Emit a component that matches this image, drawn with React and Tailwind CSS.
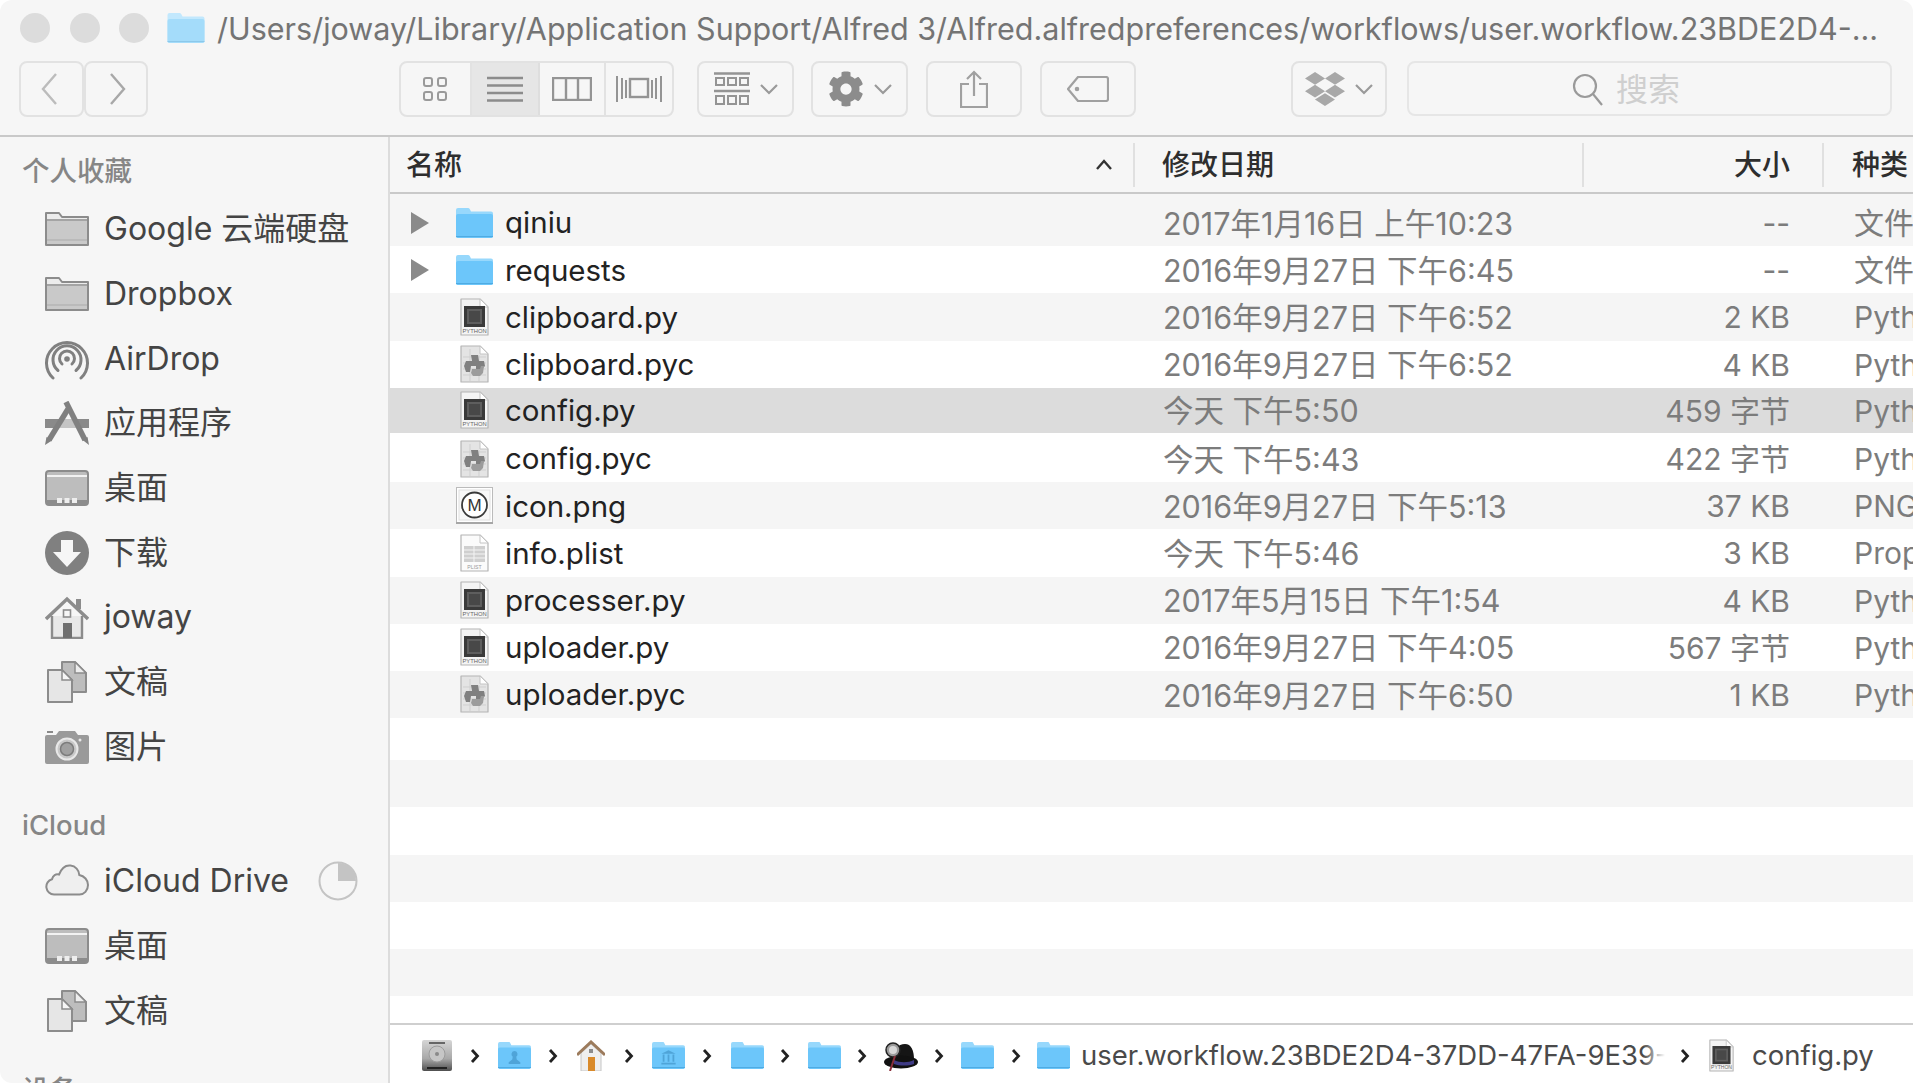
import { FaCog, FaDropbox } from "react-icons/fa";

const files = [
  { icon: "folder", name: "qiniu", date: "2017年1月16日 上午10:23", size: "--", kind: "文件夹", arrow: true },
  { icon: "folder", name: "requests", date: "2016年9月27日 下午6:45", size: "--", kind: "文件夹", arrow: true },
  { icon: "py", name: "clipboard.py", date: "2016年9月27日 下午6:52", size: "2 KB", kind: "Python 源代码" },
  { icon: "pyc", name: "clipboard.pyc", date: "2016年9月27日 下午6:52", size: "4 KB", kind: "Python 字节码" },
  { icon: "py", name: "config.py", date: "今天 下午5:50", size: "459 字节", kind: "Python 源代码", selected: true },
  { icon: "pyc", name: "config.pyc", date: "今天 下午5:43", size: "422 字节", kind: "Python 字节码" },
  { icon: "png", name: "icon.png", date: "2016年9月27日 下午5:13", size: "37 KB", kind: "PNG 图像" },
  { icon: "plist", name: "info.plist", date: "今天 下午5:46", size: "3 KB", kind: "Property List" },
  { icon: "py", name: "processer.py", date: "2017年5月15日 下午1:54", size: "4 KB", kind: "Python 源代码" },
  { icon: "py", name: "uploader.py", date: "2016年9月27日 下午4:05", size: "567 字节", kind: "Python 源代码" },
  { icon: "pyc", name: "uploader.pyc", date: "2016年9月27日 下午6:50", size: "1 KB", kind: "Python 字节码" },
];

function GrayFolder() {
  return (
    <svg width="44" height="36" viewBox="0 0 44 36">
      <path d="M1 34V2h13l3 4h26v28z" fill="#ececec" stroke="#8c8c8c" strokeWidth="2" strokeLinejoin="round" />
      <rect x="2" y="10" width="40" height="23" fill="#c9c9c9" />
      <path d="M2 9h40" stroke="#8c8c8c" strokeWidth="1.5" />
      <path d="M2 29h40" stroke="#b5b5b5" strokeWidth="1.5" />
    </svg>
  );
}

function AirDropIcon() {
  return (
    <svg width="44" height="44" viewBox="0 0 44 44" fill="none" stroke="#808080" strokeWidth="3" strokeLinecap="round">
      <path d="M8 41A20.500 20.500 0 1 1 36 41" />
      <path d="M13 33.500A14 14 0 1 1 31 33.500" />
      <path d="M17 27A7.500 7.500 0 1 1 27 27" />
      <circle cx="22" cy="22" r="2.800" fill="#808080" stroke="none" />
    </svg>
  );
}

function AppsIcon() {
  return (
    <svg width="44" height="44" viewBox="0 0 44 44">
      <path d="M0 18h44v9H0z" fill="#8a8a8a" />
      <path d="M15 18h14l4 9H11z" fill="#c4c4c4" />
      <path d="M21 1l19 38" stroke="#808080" strokeWidth="5.500" />
      <path d="M23 8L4 39" stroke="#808080" strokeWidth="5.500" />
      <path d="M0 44l1.500-8 5.500 3.500zM44 44l-7-5.500 5.500-2.500z" fill="#808080" />
    </svg>
  );
}

function DesktopIcon() {
  return (
    <svg width="44" height="36" viewBox="0 0 44 36">
      <rect x="1" y="1" width="42" height="34" rx="3" fill="#bdbdbd" stroke="#8c8c8c" strokeWidth="2" />
      <rect x="2" y="5" width="40" height="2" fill="#f2f2f2" />
      <rect x="2" y="30" width="40" height="4" fill="#8c8c8c" />
      <rect x="12" y="28" width="5" height="5" fill="#eee" />
      <rect x="19.500" y="28" width="5" height="5" fill="#eee" />
      <rect x="27" y="28" width="5" height="5" fill="#eee" />
    </svg>
  );
}

function DownloadIcon() {
  return (
    <svg width="44" height="44" viewBox="0 0 44 44">
      <circle cx="22" cy="22" r="22" fill="#808080" />
      <path d="M16 9h12v12h8L22 36 8 21h8z" fill="#f6f6f6" />
    </svg>
  );
}

function HomeIcon() {
  return (
    <svg width="44" height="44" viewBox="0 0 44 44">
      <path d="M7 21v22h30V21" fill="#e8e8e8" stroke="#8c8c8c" strokeWidth="2.400" />
      <path d="M1 24L22 4l21 20" fill="none" stroke="#8c8c8c" strokeWidth="3.400" />
      <rect x="31" y="4" width="5" height="10" fill="#8c8c8c" />
      <rect x="18" y="28" width="9" height="15" fill="#6f6f6f" />
      <rect x="18.500" y="15" width="7" height="7" fill="#f6f6f6" stroke="#8c8c8c" strokeWidth="1.600" />
    </svg>
  );
}

function DocsIcon() {
  return (
    <svg width="40" height="42" viewBox="0 0 40 42">
      <path d="M15 1h13l11 11v19H15z" fill="#bdbdbd" stroke="#8c8c8c" strokeWidth="2" strokeLinejoin="round" />
      <path d="M28 1v11h11z" fill="#ededed" stroke="#8c8c8c" strokeWidth="1.500" />
      <path d="M1 9h14l10 10v22H1z" fill="#e6e6e6" stroke="#8c8c8c" strokeWidth="2" strokeLinejoin="round" />
      <path d="M15 9v10h10z" fill="#f6f6f6" stroke="#8c8c8c" strokeWidth="1.500" />
    </svg>
  );
}

function CameraIcon() {
  return (
    <svg width="44" height="34" viewBox="0 0 44 34">
      <path d="M2 5h9l3-4h16l3 4h9a2 2 0 0 1 2 2v25a2 2 0 0 1-2 2H2a2 2 0 0 1-2-2V7a2 2 0 0 1 2-2z" fill="#9a9a9a" />
      <rect x="2" y="1" width="6" height="2" fill="#8a8a8a" />
      <circle cx="22" cy="19" r="10.500" fill="#c8c8c8" stroke="#e8e8e8" strokeWidth="2" />
      <circle cx="22" cy="19" r="6.500" fill="#a0a0a0" stroke="#7c7c7c" strokeWidth="1.500" />
      <circle cx="35" cy="10" r="1.500" fill="#e8e8e8" />
    </svg>
  );
}

function CloudIcon() {
  return (
    <svg width="44" height="32" viewBox="0 0 44 32" className="-mt-[3px]">
      <path d="M9 30.500a7.800 7.800 0 0 1-2-15.300c.8-4 4-5.600 7-4.600C16.500 4 21 1 25.500 1.500c5 .5 8.500 4.500 8.800 9.500 5 1 8.700 5 8.700 10 0 5.500-4 9.500-8.500 9.500z" fill="#efefef" stroke="#8c8c8c" strokeWidth="2" />
    </svg>
  );
}

function PieIcon() {
  return (
    <svg width="40" height="40" viewBox="0 0 40 40">
      <circle cx="20" cy="20" r="18.500" fill="#f6f6f6" stroke="#c4c4c4" strokeWidth="2" />
      <path d="M20 20V2a18 18 0 0 1 18 18z" fill="#c4c4c4" />
    </svg>
  );
}

function BlueFolder({ w = 37, h = 30, back = "#97d8fc", front = "#6cc6fa", edge = "#4fabe2", glyph }) {
  return (
    <svg width={w} height={h} viewBox="0 0 37 30">
      <path d="M0 28V2a2 2 0 0 1 2-2h10a2 2 0 0 1 2 1.500l1 2h20a2 2 0 0 1 2 2V28a2 2 0 0 1-2 2H2a2 2 0 0 1-2-2z" fill={back} />
      <path d="M0 8a2 2 0 0 1 2-2h33a2 2 0 0 1 2 2v20a2 2 0 0 1-2 2H2a2 2 0 0 1-2-2z" fill={front} />
      <path d="M0 28.500h37" stroke={edge} strokeWidth="1.200" />
      {glyph === "user" && (
        <path d="M18.500 10a3.500 3.500 0 0 1 2 6.300l.5 3.200 4 3v2H12v-2l4-3 .5-3.200a3.500 3.500 0 0 1 2-6.300z" fill="#4fa4d8" />
      )}
      {glyph === "library" && (
        <path d="M18.500 9l8 4H10.500zM12 14h2v8h-2zM17.500 14h2v8h-2zM23 14h2v8h-2zM10.500 23h16v2h-16z" fill="#4fa4d8" />
      )}
    </svg>
  );
}

function PageShape({ fill = "#f4f4f4" }) {
  return (
    <>
      <path d="M1 1h19l8 8v28H1z" fill={fill} stroke="#b4b4b4" strokeWidth="1.200" strokeLinejoin="round" />
      <path d="M20 1v8h8z" fill="#fff" stroke="#c4c4c4" strokeWidth="1" />
    </>
  );
}

function PyIcon({ w = 29, h = 38 }) {
  return (
    <svg width={w} height={h} viewBox="0 0 29 38">
      <PageShape />
      <rect x="4" y="8" width="21" height="21" fill="#3a3a3a" />
      <rect x="7" y="11" width="15" height="15" fill="#5e5e5e" />
      <rect x="9" y="13" width="11" height="11" fill="#484848" />
      <text x="14.500" y="35" textAnchor="middle" fontSize="5.800" fill="#666" fontFamily="Liberation Sans, sans-serif">PYTHON</text>
    </svg>
  );
}

function PycIcon() {
  return (
    <svg width="29" height="38" viewBox="0 0 29 38">
      <PageShape fill="#e4e4e4" />
      <path d="M3 12h23M3 18h23M3 24h23M3 30h23M10 4v32M19 10v26" stroke="#cfcfcf" strokeWidth="1" />
      <path d="M11 10h7l1 6h5l1 5-3 3h-6v-3h-5l-1 6H6l-2-6 2-5h6z" fill="#808080" />
      <path d="M12 24h8l1-3h3l-1 7-3 3h-7l-2-3z" fill="#9c9c9c" />
    </svg>
  );
}

function PngIcon() {
  return (
    <svg width="37" height="37" viewBox="0 0 37 37">
      <rect x="0.500" y="0.500" width="36" height="35" fill="#fff" stroke="#bbb" />
      <rect x="0" y="35" width="37" height="2" fill="#a6a6a6" />
      <rect x="3" y="3" width="31" height="30" fill="#f8f8f8" stroke="#e0e0e0" />
      <circle cx="18.500" cy="18" r="12.500" fill="#fff" stroke="#3a3a3a" strokeWidth="1.800" />
      <text x="18.500" y="24" textAnchor="middle" fontSize="17" fill="#333" fontFamily="Liberation Sans, sans-serif">M</text>
    </svg>
  );
}

function PlistIcon() {
  return (
    <svg width="29" height="38" viewBox="0 0 29 38">
      <PageShape fill="#fbfbfb" />
      <rect x="4" y="12" width="21" height="16" fill="#cfcfcf" />
      <path d="M4 16h21M4 20h21M4 24h21M14 12v16" stroke="#f4f4f4" strokeWidth="1" />
      <text x="14.500" y="35" textAnchor="middle" fontSize="5.200" fill="#999" fontFamily="Liberation Sans, sans-serif">PLIST</text>
    </svg>
  );
}

function DiskIcon() {
  return (
    <svg width="30" height="31" viewBox="0 0 30 31">
      <defs>
        <linearGradient id="diskBody" x1="0" y1="0" x2="0" y2="1">
          <stop offset="0" stopColor="#d6d6d6" />
          <stop offset="0.600" stopColor="#a8a8a8" />
          <stop offset="1" stopColor="#4e4e4e" />
        </linearGradient>
      </defs>
      <rect x="0" y="0" width="30" height="31" rx="2" fill="url(#diskBody)" />
      <rect x="7" y="2" width="16" height="2" fill="#666" />
      <circle cx="15" cy="14" r="8" fill="#c6c6c6" stroke="#9c9c9c" />
      <circle cx="15" cy="14" r="2" fill="#8a8a8a" />
      <rect x="5" y="27" width="20" height="2" fill="#222" />
    </svg>
  );
}

function HomeColor() {
  return (
    <svg width="28" height="31" viewBox="0 0 28 31">
      <path d="M4 13v18h20V13L14 4z" fill="#efefef" stroke="#c6c6c6" />
      <path d="M0 15L14 2l14 13" fill="none" stroke="#9c7b5c" strokeWidth="3" />
      <rect x="11" y="17" width="7" height="14" fill="#d98a2b" />
      <rect x="12" y="9" width="4" height="4" fill="#8c8c8c" />
    </svg>
  );
}

function HatIcon() {
  return (
    <svg width="34" height="30" viewBox="0 0 34 30">
      <path d="M9 19C9 8 14 3 21 3c6 0 9 6 9 16z" fill="#151515" />
      <ellipse cx="17" cy="21" rx="17" ry="6.500" fill="#111" />
      <path d="M10 19c6 3 14 3 20 0v4c-6 2-14 2-20 0z" fill="#3f3b86" />
      <circle cx="9" cy="9" r="7" fill="#9a9a9a" stroke="#222" strokeWidth="1.500" />
      <circle cx="9" cy="9" r="4" fill="#d8d8d8" />
      <path d="M11 15L6 30" stroke="#8a2f3a" strokeWidth="2" />
    </svg>
  );
}

function PathChevron() {
  return (
    <svg width="10" height="16" viewBox="0 0 10 16" fill="none" stroke="#222" strokeWidth="2.800">
      <path d="M2 2l5.500 6L2 14" />
    </svg>
  );
}

function SmallDown() {
  return (
    <svg width="18" height="11" viewBox="0 0 18 11" fill="none" stroke="#9a9a9a" strokeWidth="2.200">
      <path d="M1 1l8 8 8-8" />
    </svg>
  );
}

function ToolButton({ className, children }) {
  return (
    <div className={"h-[56px] flex items-center justify-center gap-[10px] border-2 border-[#e2e2e2] rounded-[8px] " + className}>
      {children}
    </div>
  );
}

function FileIcon({ type }) {
  if (type === "folder") return <BlueFolder />;
  if (type === "py") return <PyIcon />;
  if (type === "pyc") return <PycIcon />;
  if (type === "png") return <PngIcon />;
  return <PlistIcon />;
}

function SideItem({ icon, label, right }) {
  return (
    <div className="h-[64.67px] flex items-center">
      <div className="w-[44px] ml-[45px] flex justify-center">{icon}</div>
      <span className="ml-[15px] text-[32px] text-[#444] whitespace-nowrap">{label}</span>
      {right && <div className="ml-auto mr-[30px]">{right}</div>}
    </div>
  );
}

function SideHeading({ children, className }) {
  return (
    <div className={"h-[40px] pl-[22px] pt-[1px] flex items-center text-[27.500px] font-medium text-[#868686] " + className}>
      {children}
    </div>
  );
}

function Row({ file, stripe, first }) {
  const bg = file.selected ? "bg-[#dcdcdc] h-[45px] mb-[2.2px]" : stripe ? "bg-[#f5f5f5] h-[47.2px]" : "bg-white h-[47.2px]";
  return (
    <div className={"flex items-center overflow-hidden whitespace-nowrap " + bg + (first ? " box-content pt-[5px]" : "")}>
      <div className="w-[745px] shrink-0 flex items-center">
        <div className="w-[66px] pl-[21px] shrink-0">
          {file.arrow && (
            <svg width="18" height="22" viewBox="0 0 18 22">
              <path d="M0 0l18 11L0 22z" fill="#8a8a8a" />
            </svg>
          )}
        </div>
        <div className="w-[37px] flex justify-center">
          <FileIcon type={file.icon} />
        </div>
        <span className="ml-[12px] text-[29.500px] text-[#222]">{file.name}</span>
      </div>
      <div className="w-[449px] shrink-0 pl-[28px] pt-[2px] text-[30.500px] text-[#7c7c7c]">{file.date}</div>
      <div className="w-[240px] shrink-0 pr-[34px] pt-[2px] text-right text-[30px] text-[#7c7c7c]">{file.size}</div>
      <div className="pl-[30px] pt-[2px] text-[30px] text-[#7c7c7c]">{file.kind}</div>
    </div>
  );
}

export default function App() {
  return (
    <div className="w-[1913px] h-[1083px] overflow-hidden bg-white">
      <div className="w-full h-full rounded-[12px] overflow-hidden flex flex-col font-[Inter,'Noto_Sans_CJK_SC',sans-serif]">

        {/* title + toolbar */}
        <div className="h-[137px] shrink-0 bg-[#f6f6f6] border-b-2 border-[#c9c9c9]">
          <div className="h-[55px] mb-[6px] flex items-center">
            <div className="ml-[20px] w-[30px] h-[30px] rounded-full bg-[#dcdcdc]" />
            <div className="ml-[19.500px] w-[30px] h-[30px] rounded-full bg-[#dcdcdc]" />
            <div className="ml-[19.500px] w-[30px] h-[30px] rounded-full bg-[#dcdcdc]" />
            <div className="ml-[18px]">
              <BlueFolder w={38} h={30} back="#c2e8fd" front="#a4dcfa" edge="#8cc8ea" />
            </div>
            <span className="ml-[12px] pt-[2px] text-[30.500px] text-[#747474] whitespace-nowrap">
              /Users/joway/Library/Application Support/Alfred 3/Alfred.alfredpreferences/workflows/user.workflow.23BDE2D4-...
            </span>
          </div>
          <div className="flex pl-[19px]">
            <ToolButton className="w-[65px]">
              <svg width="18" height="34" viewBox="0 0 18 34" fill="none" stroke="#bcbcbc" strokeWidth="2.400" className="-ml-[6px]"><path d="M16 2L3 17l13 15" /></svg>
            </ToolButton>
            <ToolButton className="w-[64px]">
              <svg width="18" height="34" viewBox="0 0 18 34" fill="none" stroke="#a8a8a8" strokeWidth="2.400" className="ml-[4px]"><path d="M2 2l13 15L2 32" /></svg>
            </ToolButton>

            <div className="ml-[251px] w-[275px] h-[56px] flex border-2 border-[#e2e2e2] rounded-[8px] overflow-hidden">
              <div className="w-[71px] flex items-center justify-center border-r-2 border-[#e2e2e2]">
                <svg width="26" height="26" viewBox="0 0 26 26" fill="none" stroke="#9a9a9a" strokeWidth="2" className="-ml-[2px]">
                  <rect x="2" y="2" width="8" height="8" rx="2" />
                  <rect x="16" y="2" width="8" height="8" rx="2" />
                  <rect x="2" y="16" width="8" height="8" rx="2" />
                  <rect x="16" y="16" width="8" height="8" rx="2" />
                </svg>
              </div>
              <div className="w-[68px] bg-[#e6e6e6] flex items-center justify-center border-r-2 border-[#dedede]">
                <svg width="36" height="26" viewBox="0 0 36 26" stroke="#8c8c8c" strokeWidth="2.400">
                  <path d="M0 2h36M0 9.500h36M0 17h36M0 24.500h36" />
                </svg>
              </div>
              <div className="w-[66px] flex items-center justify-center border-r-2 border-[#e2e2e2]">
                <svg width="40" height="24" viewBox="0 0 40 24" fill="none" stroke="#949494" strokeWidth="2.400">
                  <rect x="1" y="1" width="38" height="22" />
                  <path d="M14 1v22M26 1v22" />
                </svg>
              </div>
              <div className="flex-1 flex items-center justify-center">
                <svg width="48" height="28" viewBox="0 0 48 28" fill="none" stroke="#949494" strokeWidth="2">
                  <rect x="15" y="4" width="18" height="18" strokeWidth="2.400" />
                  <path d="M2 1v26M7 3v21M11 5v18M46 1v26M41 3v21M37 5v18" />
                </svg>
              </div>
            </div>

            <ToolButton className="ml-[23px] w-[97px]">
              <svg width="36" height="36" viewBox="0 0 36 36" fill="none" stroke="#949494" strokeWidth="2" className="mt-[2px]">
                <path d="M0 1.500h36M0 19h36" strokeWidth="2.400" />
                <path d="M2 6h8v7H2zM14 6h8v7h-8zM26 6h8v7h-8zM2 24h8v8H2zM14 24h8v8h-8zM26 24h8v8h-8z" />
              </svg>
              <SmallDown />
            </ToolButton>
            <ToolButton className="ml-[17px] w-[97px]">
              <FaCog className="w-[36px] h-[36px] text-[#8c8c8c]" />
              <SmallDown />
            </ToolButton>
            <ToolButton className="ml-[18px] w-[96px]">
              <svg width="28" height="38" viewBox="0 0 28 38" fill="none" stroke="#a0a0a0" strokeWidth="2.200">
                <path d="M9 14H1v23h26V14h-8" />
                <path d="M14 26V2M7 9l7-7 7 7" />
              </svg>
            </ToolButton>
            <ToolButton className="ml-[18px] w-[96px]">
              <svg width="42" height="26" viewBox="0 0 42 26" fill="none" stroke="#a0a0a0" strokeWidth="2.200">
                <path d="M11 1h28a2 2 0 0 1 2 2v20a2 2 0 0 1-2 2H11L1 13z" strokeLinejoin="round" />
                <circle cx="10" cy="13" r="1.200" fill="#a0a0a0" />
              </svg>
            </ToolButton>
            <ToolButton className="ml-[155px] w-[96px]">
              <FaDropbox className="w-[40px] h-[40px] text-[#a8a8a8]" />
              <SmallDown />
            </ToolButton>
            <div className="ml-[20px] w-[485px] h-[55px] flex items-center justify-center gap-[12px] pr-[47px] pt-[2px] border-2 border-[#e6e6e6] rounded-[8px]">
              <svg width="32" height="34" viewBox="0 0 32 34" fill="none" stroke="#9a9a9a" strokeWidth="2.200">
                <circle cx="13" cy="13" r="11" />
                <path d="M21 21l9 11" />
              </svg>
              <span className="text-[32px] text-[#cfcfcf]">搜索</span>
            </div>
          </div>
        </div>

        <div className="flex-1 flex min-h-0">
          {/* sidebar */}
          <div className="w-[390px] shrink-0 bg-[#f6f6f6] border-r-2 border-[#dcdcdc] overflow-hidden pt-[14px]">
            <SideHeading className="mb-[6px]">个人收藏</SideHeading>
            <SideItem icon={<GrayFolder />} label="Google 云端硬盘" />
            <SideItem icon={<GrayFolder />} label="Dropbox" />
            <SideItem icon={<AirDropIcon />} label="AirDrop" />
            <SideItem icon={<AppsIcon />} label="应用程序" />
            <SideItem icon={<DesktopIcon />} label="桌面" />
            <SideItem icon={<DownloadIcon />} label="下载" />
            <SideItem icon={<HomeIcon />} label="joway" />
            <SideItem icon={<DocsIcon />} label="文稿" />
            <SideItem icon={<CameraIcon />} label="图片" />
            <SideHeading className="mt-[26px] mb-[4px]">iCloud</SideHeading>
            <SideItem icon={<CloudIcon />} label="iCloud Drive" right={<PieIcon />} />
            <SideItem icon={<DesktopIcon />} label="桌面" />
            <SideItem icon={<DocsIcon />} label="文稿" />
            <SideHeading className="mt-[27px]">设备</SideHeading>
          </div>

          {/* file list */}
          <div className="flex-1 min-w-0 flex flex-col">
            <div className="h-[57px] shrink-0 bg-[#f6f6f6] border-b-2 border-[#c9c9c9] flex items-center text-[28px] font-medium text-[#2e2e2e] whitespace-nowrap overflow-hidden">
              <div className="w-[745px] shrink-0 h-[44px] flex items-center justify-between pl-[16px] pr-[20px] border-r-2 border-[#e0e0e0]">
                <span>名称</span>
                <svg width="18" height="11" viewBox="0 0 18 11" fill="none" stroke="#333" strokeWidth="2.400"><path d="M2 10l7-8 7 8" /></svg>
              </div>
              <div className="w-[449px] shrink-0 h-[44px] flex items-center pl-[27px] border-r-2 border-[#e0e0e0]">修改日期</div>
              <div className="w-[240px] shrink-0 h-[44px] flex items-center justify-end pr-[32px] border-r-2 border-[#e0e0e0]">大小</div>
              <div className="pl-[28px]">种类</div>
            </div>

            <div className="flex-1 min-h-0 flex flex-col">
              {files.map((file, i) => (
                <Row key={file.name} file={file} stripe={i % 2 === 0} first={i === 0} />
              ))}
              <div className="h-[42px] bg-white" />
              <div className="h-[47px] bg-[#f5f5f5]" />
              <div className="h-[47.500px] bg-white" />
              <div className="h-[47px] bg-[#f5f5f5]" />
              <div className="h-[47.500px] bg-white" />
              <div className="h-[47px] bg-[#f5f5f5]" />
              <div className="flex-1 bg-white" />
            </div>

            {/* path bar */}
            <div className="h-[60px] shrink-0 border-t-2 border-[#cfcfcf] bg-white flex items-center pl-[32px] pt-[3px] whitespace-nowrap">
              <DiskIcon />
              <div className="ml-[18px]"><PathChevron /></div>
              <div className="ml-[18px]"><BlueFolder w={33} h={27} glyph="user" /></div>
              <div className="ml-[17px]"><PathChevron /></div>
              <div className="ml-[19px]"><HomeColor /></div>
              <div className="ml-[19px]"><PathChevron /></div>
              <div className="ml-[18px]"><BlueFolder w={33} h={27} glyph="library" /></div>
              <div className="ml-[17px]"><PathChevron /></div>
              <div className="ml-[19px]"><BlueFolder w={33} h={27} /></div>
              <div className="ml-[16px]"><PathChevron /></div>
              <div className="ml-[18px]"><BlueFolder w={33} h={27} /></div>
              <div className="ml-[16px]"><PathChevron /></div>
              <div className="ml-[17px]"><HatIcon /></div>
              <div className="ml-[16px]"><PathChevron /></div>
              <div className="ml-[17px]"><BlueFolder w={33} h={27} /></div>
              <div className="ml-[17px]"><PathChevron /></div>
              <div className="ml-[16px]"><BlueFolder w={33} h={27} /></div>
              <span className="relative ml-[11px] w-[584px] overflow-hidden text-[27.500px] text-[#4a4a4a]">
                user.workflow.23BDE2D4-37DD-47FA-9E39-
                <span className="absolute right-0 top-0 bottom-0 w-[22px] bg-gradient-to-l from-white to-transparent" />
              </span>
              <div className="ml-[15px]"><PathChevron /></div>
              <div className="ml-[19px]"><PyIcon w={25} h={33} /></div>
              <span className="ml-[18px] text-[27.500px] text-[#4a4a4a]">config.py</span>
            </div>
          </div>
        </div>
      </div>
    </div>
  );
}
